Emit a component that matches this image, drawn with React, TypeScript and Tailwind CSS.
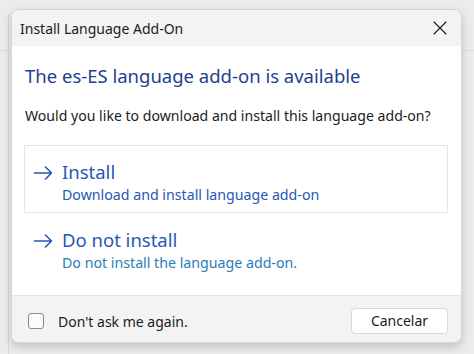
import { X } from "lucide-react";

const Arrow = ({ className }: { className?: string }) => (
  <svg width="20" height="14" viewBox="0 0 20 14" className={className} fill="none">
    <path d="M1 7h17M12 1l6 6-6 6" stroke="currentColor" strokeWidth="1.6" strokeLinecap="round" strokeLinejoin="round" />
  </svg>
);

const Option = ({
  title,
  subtitle,
  boxed,
  subColor,
}: {
  title: string;
  subtitle: string;
  boxed?: boolean;
  subColor: string;
}) => (
  <div
    className={`flex h-[68px] flex-col justify-center border pl-[8px] pt-[8px] ${
      boxed ? "border-[#e6e6e6]" : "border-transparent"
    }`}
  >
    <div className="flex items-center text-[#2757b8]">
      <Arrow className="mt-[1px] w-[21px]" />
      <span className="ml-[8px] text-[18.5px] leading-[24px]">{title}</span>
    </div>
    <div className={`ml-[29px] text-[14.2px] leading-[22px] ${subColor}`}>{subtitle}</div>
  </div>
);

export default function App() {
  return (
    <div
      className="relative h-[354px] w-[474px] overflow-hidden bg-[#ececec] pl-[11px] pt-[9px]"
      style={{ fontFamily: '"Noto Sans", "Open Sans", sans-serif' }}
    >
      <div className="absolute left-[8px] top-[14px] h-[340px] w-px bg-[#d9d9d9]" />
      <div className="absolute left-0 top-[50px] h-px w-[474px] bg-[#dcdcdc]" />

      <div className="relative flex h-[334px] w-[451px] flex-col overflow-hidden rounded-[8px] border border-[#d6d6d6] bg-white shadow-[0_4px_10px_rgba(0,0,0,0.18)]">
        <div className="flex h-[36px] shrink-0 items-center justify-between bg-[#f3f3f3] pl-[8px] pr-[9px]">
          <span className="text-[14px] text-[#1b1b1b]">Install Language Add-On</span>
          <X size={24} strokeWidth={1.1} className="text-[#1b1b1b]" />
        </div>

        <div className="flex flex-1 flex-col bg-white px-[12px] pt-[17px]">
          <div className="pl-[1px] text-[18.5px] leading-[26px] text-[#1f3f8f]">
            The es-ES language add-on is available
          </div>
          <div className="mt-[17px] pl-[1px] text-[14.1px] leading-[20px] text-[#1b1b1b]">
            Would you like to download and install this language add-on?
          </div>
          <div className="mt-[19px] mr-[1px] flex flex-col">
            <Option
              title="Install"
              subtitle="Download and install language add-on"
              boxed
              subColor="text-[#2757b8]"
            />
            <Option
              title="Do not install"
              subtitle="Do not install the language add-on."
              subColor="text-[#2b7db8]"
            />
          </div>
        </div>

        <div className="flex h-[47px] shrink-0 items-center justify-between border-t border-[#e3e3e3] bg-[#f3f3f3] pl-[16px] pr-[13px] pt-[4px]">
          <div className="flex items-center">
            <div className="h-[16px] w-[16px] rounded-[3px] border border-[#8a8a8a] bg-[#fbfbfb]" />
            <span className="ml-[14px] text-[14px] text-[#1b1b1b]">Don't ask me again.</span>
          </div>
          <button className="mb-[1px] flex h-[26px] w-[97px] items-center justify-center rounded-[4px] border border-[#d8d8d8] bg-white text-[14px] text-[#1b1b1b]">
            Cancelar
          </button>
        </div>
      </div>
    </div>
  );
}
